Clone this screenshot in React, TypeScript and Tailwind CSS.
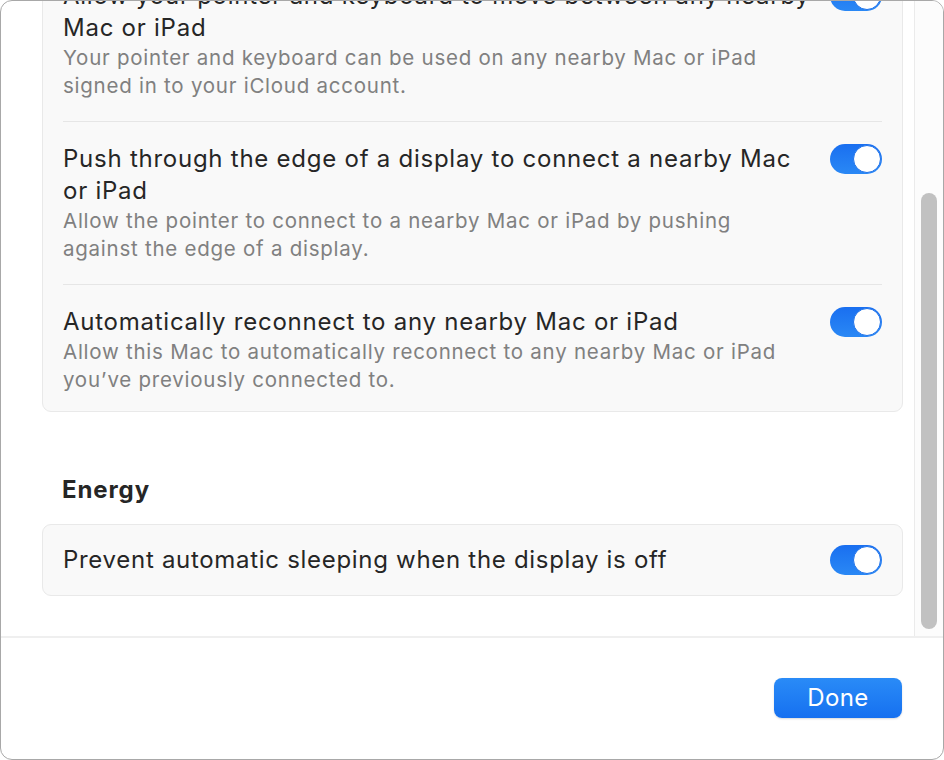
import React from "react";

function Toggle() {
  return (
    <div className="relative w-[52px] h-[30px] shrink-0 rounded-full bg-gradient-to-b from-[#1a6ff0] to-[#2a88f5]">
      <div className="absolute right-[1px] top-[1px] w-[28px] h-[28px] rounded-full bg-white border border-[#1e72ea]" />
    </div>
  );
}

function Row({
  title,
  desc,
  last,
}: {
  title: React.ReactNode;
  desc: React.ReactNode;
  last?: boolean;
}) {
  return (
    <div className={"mx-[20px] flex items-start justify-between gap-5 pt-[21px] " + (last ? "pb-[17px]" : "pb-[21px] border-b border-[#e6e6e6]")}>
      <div className="flex flex-col whitespace-nowrap">
        <div className="text-[24px] leading-[32px] tracking-[0.75px] text-[#262626]">{title}</div>
        <div className="text-[20.5px] leading-[28px] tracking-[0.75px] text-[#808080]">{desc}</div>
      </div>
      <div className="pt-[1px]">
        <Toggle />
      </div>
    </div>
  );
}

export default function App() {
  return (
    <div
      className="w-[944px] h-[760px] bg-white"
      style={{ fontFamily: "Inter, 'Noto Sans', sans-serif" }}
    >
      <div className="w-[944px] h-[760px] bg-white border border-[#a8a8a8] rounded-[12px] overflow-hidden flex flex-col">
        <div className="h-[635px] flex shrink-0">
          <div className="flex-1 overflow-hidden pl-[41px] pr-[11px]">
            <div className="mt-[-43px] rounded-[9px] bg-[#f9f9f9] border border-[#e9e9e9]">
              <Row
                title={<>Allow your pointer and keyboard to move between any nearby<br />Mac or iPad</>}
                desc={<>Your pointer and keyboard can be used on any nearby Mac or iPad<br />signed in to your iCloud account.</>}
              />
              <Row
                title={<>Push through the edge of a display to connect a nearby Mac<br />or iPad</>}
                desc={<>Allow the pointer to connect to a nearby Mac or iPad by pushing<br />against the edge of a display.</>}
              />
              <Row
                title={<>Automatically reconnect to any nearby Mac or iPad</>}
                desc={<>Allow this Mac to automatically reconnect to any nearby Mac or iPad<br />you’ve previously connected to.</>}
                last
              />
            </div>
            <div className="mt-[63px] mb-[19px] px-[20px] text-[24px] leading-[30px] tracking-[0.9px] font-bold text-[#262626]">
              Energy
            </div>
            <div className="h-[72px] rounded-[9px] bg-[#f9f9f9] border border-[#e9e9e9] px-[20px] flex items-center justify-between">
              <div className="text-[24px] leading-[32px] tracking-[0.7px] text-[#262626]">
                Prevent automatic sleeping when the display is off
              </div>
              <Toggle />
            </div>
          </div>
          <div className="w-[29px] border-l border-[#ebebeb] bg-[#fcfcfc] flex flex-col pt-[192px] pb-[7px] px-[6px]">
            <div className="flex-1 rounded-full bg-[#c1c1c1]" />
          </div>
        </div>
        <div className="flex-1 border-t-2 border-[#efefef] flex justify-end items-start pt-[40px] pr-[41px]">
          <button className="w-[128px] h-[40px] rounded-[8px] bg-gradient-to-b from-[#2a8bf7] to-[#1670f0] text-white text-[24px] leading-[40px] tracking-[0.4px] shadow-[0_1px_2px_rgba(0,0,0,0.15)]">
            Done
          </button>
        </div>
      </div>
    </div>
  );
}
